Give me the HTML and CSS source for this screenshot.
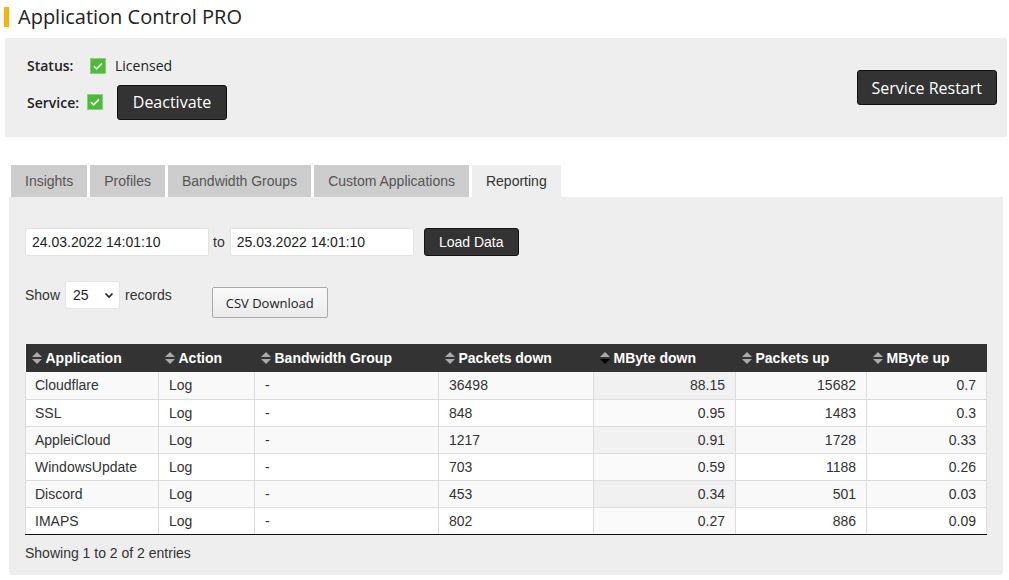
FILE: index.html
```html
<!DOCTYPE html>
<html lang="en">
<head>
    <meta charset="UTF-8">
    <title>Application Control PRO</title>
    <link rel="stylesheet" href="styles.css">
</head>
<body>
    <h1 class="page-title">Application Control PRO</h1>

    <div class="status-panel">
        <div class="status-info">
            <div class="status-row">
                <span class="lbl lbl-status">Status:</span>
                <span class="chk"><svg width="16" height="16" viewBox="0 0 16 16"><path d="M4 8.2l2.6 2.6L12 5.4" fill="none" stroke="#fff" stroke-width="1.6"/></svg></span>
                <span class="licensed">Licensed</span>
            </div>
            <div class="status-row">
                <span class="lbl lbl-service">Service:</span>
                <span class="chk"><svg width="16" height="16" viewBox="0 0 16 16"><path d="M4 8.2l2.6 2.6L12 5.4" fill="none" stroke="#fff" stroke-width="1.6"/></svg></span>
                <button class="btn-dark btn-big">Deactivate</button>
            </div>
        </div>
        <button class="btn-dark btn-big">Service Restart</button>
    </div>

    <!-- tabs -->
    <ul class="tabs">
        <li>Insights</li>
        <li>Profiles</li>
        <li>Bandwidth Groups</li>
        <li>Custom Applications</li>
        <li class="active">Reporting</li>
    </ul>

    <div class="tab-panel">
        <div class="date-row">
            <input class="date-input" type="text" value="24.03.2022 14:01:10">
            <span class="to">to</span>
            <input class="date-input" type="text" value="25.03.2022 14:01:10">
            <button class="btn-load">Load Data</button>
        </div>

        <div class="show-row">
            <span>Show</span>
            <span class="select-wrap">
                <select class="records-select"><option>25</option><option>50</option><option>100</option></select>
                <svg class="chev" width="10" height="7" viewBox="0 0 10 7"><path d="M1.5 1.5L5 5l3.5-3.5" fill="none" stroke="#222" stroke-width="1.6"/></svg>
            </span>
            <span>records</span>
            <button class="btn-csv">CSV Download</button>
        </div>

        <table class="report">
            <colgroup>
                <col style="width:133px"><col style="width:96px"><col style="width:184px"><col style="width:155px">
                <col style="width:142px"><col style="width:131px"><col style="width:120px">
            </colgroup>
            <thead>
                <tr>
                    <th><span class="sort"><svg width="10" height="14" viewBox="0 0 10 14"><path d="M0 6L5 1l5 5z" fill="#aaa"/><path d="M0 8l5 5 5-5z" fill="#aaa"/></svg></span>Application</th>
                    <th><span class="sort"><svg width="10" height="14" viewBox="0 0 10 14"><path d="M0 6L5 1l5 5z" fill="#aaa"/><path d="M0 8l5 5 5-5z" fill="#aaa"/></svg></span>Action</th>
                    <th><span class="sort"><svg width="10" height="14" viewBox="0 0 10 14"><path d="M0 6L5 1l5 5z" fill="#aaa"/><path d="M0 8l5 5 5-5z" fill="#aaa"/></svg></span>Bandwidth Group</th>
                    <th><span class="sort"><svg width="10" height="14" viewBox="0 0 10 14"><path d="M0 6L5 1l5 5z" fill="#aaa"/><path d="M0 8l5 5 5-5z" fill="#aaa"/></svg></span>Packets down</th>
                    <th><span class="sort"><svg width="10" height="14" viewBox="0 0 10 14"><path d="M0 6L5 1l5 5z" fill="#aaa"/><path d="M0 8l5 5 5-5z" fill="#000"/></svg></span>MByte down</th>
                    <th><span class="sort"><svg width="10" height="14" viewBox="0 0 10 14"><path d="M0 6L5 1l5 5z" fill="#aaa"/><path d="M0 8l5 5 5-5z" fill="#aaa"/></svg></span>Packets up</th>
                    <th><span class="sort"><svg width="10" height="14" viewBox="0 0 10 14"><path d="M0 6L5 1l5 5z" fill="#aaa"/><path d="M0 8l5 5 5-5z" fill="#aaa"/></svg></span>MByte up</th>
                </tr>
            </thead>
            <tbody>
                <tr><td>Cloudflare</td><td>Log</td><td>-</td><td>36498</td><td class="num sorted">88.15</td><td class="num">15682</td><td class="num">0.7</td></tr>
                <tr><td>SSL</td><td>Log</td><td>-</td><td>848</td><td class="num sorted">0.95</td><td class="num">1483</td><td class="num">0.3</td></tr>
                <tr><td>AppleiCloud</td><td>Log</td><td>-</td><td>1217</td><td class="num sorted">0.91</td><td class="num">1728</td><td class="num">0.33</td></tr>
                <tr><td>WindowsUpdate</td><td>Log</td><td>-</td><td>703</td><td class="num sorted">0.59</td><td class="num">1188</td><td class="num">0.26</td></tr>
                <tr><td>Discord</td><td>Log</td><td>-</td><td>453</td><td class="num sorted">0.34</td><td class="num">501</td><td class="num">0.03</td></tr>
                <tr><td>IMAPS</td><td>Log</td><td>-</td><td>802</td><td class="num sorted">0.27</td><td class="num">886</td><td class="num">0.09</td></tr>
            </tbody>
        </table>

        <div class="table-info">Showing 1 to 2 of 2 entries</div>
    </div>
</body>
</html>
```

FILE: styles.css
```css
*{
    box-sizing: border-box;
    margin: 0;
    padding: 0;
}
body{
    font-family: "Liberation Sans", Arial, sans-serif;
    color: #333;
    background: #fff;
}
.page-title{
    margin: 7px 0 0 4px;
    border-left: 5px solid #f8b400;
    padding-left: 9px;
    font-family: "Open Sans", sans-serif;
    font-weight: 400;
    font-size: 20px;
    line-height: 20px;
    color: #222;
}
.status-panel{
    margin: 11px 2px 0 5px;
    height: 99px;
    background: #eee;
    border-radius: 2px;
    padding: 0 10px 0 22px;
    display: flex;
    justify-content: space-between;
    align-items: center;
    font-family: "Open Sans", sans-serif;
    font-size: 14px;
    color: #222;
}
.status-info{
    display: flex;
    flex-direction: column;
    gap: 9px;
}
.status-row{
    display: flex;
    align-items: center;
    min-height: 20px;
}
.lbl{
    font-weight: 600;
}
.lbl-status{
    width: 63px;
}
.lbl-service{
    width: 60px;
}
.chk{
    width: 16px;
    height: 16px;
    background: #4cbb3a;
    border: 1px solid #7fd672;
    display: flex;
    align-items: center;
    justify-content: center;
}
.chk svg{
    display: block;
    flex: none;
}
.licensed{
    margin-left: 9px;
}
.btn-dark{
    background: #333;
    color: #fff;
    border: 1px solid #111;
    border-radius: 3px;
    cursor: pointer;
}
.btn-big{
    height: 35px;
    padding: 0 14px;
    font-family: "Open Sans", sans-serif;
    font-size: 16px;
}
.status-row .btn-big{
    margin-left: 14px;
    width: 110px;
}

/* tabs */
.tabs{
    list-style: none;
    display: flex;
    gap: 3px;
    margin: 28px 0 0 11px;
}
.tabs li{
    height: 32px;
    line-height: 32px;
    padding: 0 14px;
    background: #cdcdcd;
    color: #555;
    font-size: 14px;
}
.tabs li.active{
    background: #eee;
    color: #333;
}
.tab-panel{
    margin: 0 6px 0 9px;
    height: 378px;
    background: #eee;
    border-radius: 0 0 3px 3px;
    padding: 31px 17px 0 16px;
    font-size: 14px;
}
.date-row{
    display: flex;
    align-items: center;
    height: 28px;
}
.date-input{
    width: 184px;
    height: 28px;
    border: 1px solid #e2e2e2;
    border-radius: 2px;
    background: #fff;
    padding-left: 6px;
    font-family: "Liberation Sans", Arial, sans-serif;
    font-size: 14px;
    color: #222;
}
.to{
    margin: 0 5px 0 4px;
}
.btn-load{
    margin-left: 10px;
    width: 95px;
    height: 28px;
    background: #333;
    color: #fff;
    border: 1px solid #111;
    border-radius: 3px;
    font-family: "Liberation Sans", Arial, sans-serif;
    font-size: 14px;
}
.show-row{
    display: flex;
    align-items: flex-start;
    margin-top: 25px;
    height: 37px;
    line-height: 28px;
}
.select-wrap{
    position: relative;
    margin: 0 5px;
}
.records-select{
    appearance: none;
    -webkit-appearance: none;
    width: 55px;
    height: 28px;
    border: 1px solid #e4e4e4;
    border-radius: 3px;
    background: #fff;
    padding-left: 7px;
    font-family: "Liberation Sans", Arial, sans-serif;
    font-size: 14px;
    color: #222;
}
.chev{
    position: absolute;
    right: 6px;
    top: 11px;
}
.btn-csv{
    margin: 6px 0 0 40px;
    width: 116px;
    height: 31px;
    background: linear-gradient(#fafafa, #eaeaea);
    border: 1px solid #aaa;
    border-radius: 2px;
    font-family: "Open Sans", sans-serif;
    font-size: 13px;
    color: #222;
}

/* table */
.report{
    margin-top: 26px;
    width: 100%;
    table-layout: fixed;
    border-collapse: collapse;
    background: #fff;
    border-bottom: 1px solid #111;
}
.report th{
    height: 28px;
    background: #333;
    color: #fff;
    text-align: left;
    font-weight: bold;
    font-size: 14px;
    padding-left: 6px;
    white-space: nowrap;
}
.report .sort{
    display: inline-block;
    vertical-align: -2px;
    margin-right: 4px;
}
.report .sort svg{
    display: block;
}
.report td{
    height: 27px;
    padding: 0 10px;
    border: 1px solid #ddd;
    border-top: 0;
    font-size: 14px;
    color: #333;
    white-space: nowrap;
}
.report td:first-child{
    padding-left: 9px;
}
.report tbody tr:nth-child(odd) td{
    background: #f9f9f9;
}
.report tbody tr:nth-child(odd) td.sorted{
    background: #f1f1f1;
}
.report tbody tr:nth-child(even) td.sorted{
    background: #fafafa;
}
.report td.num{
    text-align: right;
}
.report tbody tr:last-child td{
    border-bottom: 1px solid #111;
}
.table-info{
    margin-top: 10px;
    font-size: 14px;
}
```
